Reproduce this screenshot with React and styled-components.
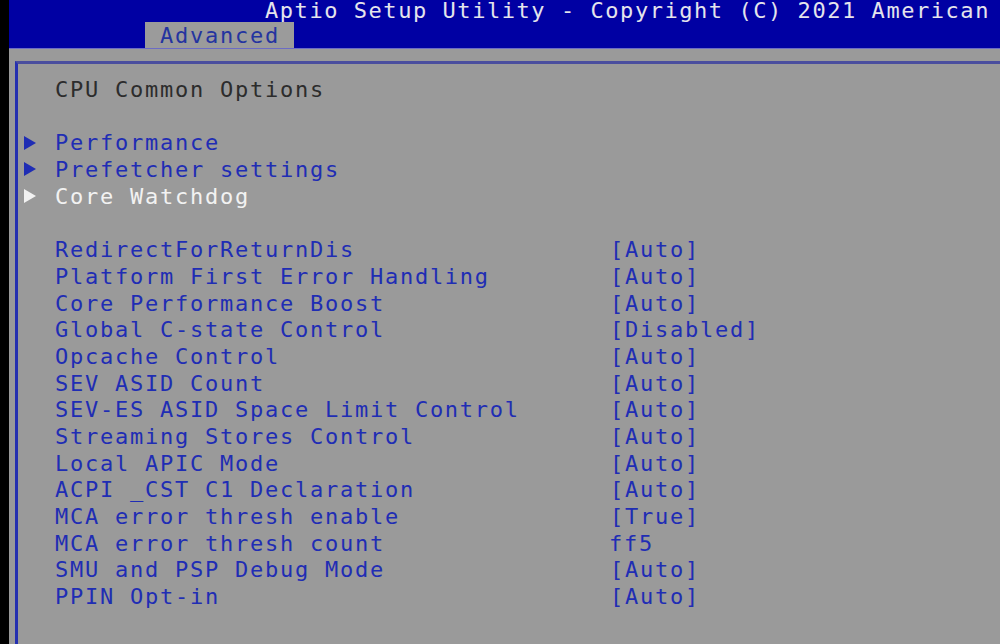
import React from 'react';
import styled, { createGlobalStyle } from 'styled-components';

const GlobalStyle = createGlobalStyle`
  html, body {
    margin: 0;
    padding: 0;
    background: #000;
    overflow: hidden;
  }
  body {
    font-family: 'DejaVu Sans Mono', 'Liberation Mono', monospace;
  }
`;

const ROW = 26.7;

const Screen = styled.div`
  display: flex;
  height: 100vh;
  background: #000;
`;

const Edge = styled.div`
  width: 9px;
  flex-shrink: 0;
`;

const Main = styled.div`
  flex: 1;
  display: flex;
  flex-direction: column;
  min-width: 0;
`;

const Header = styled.div`
  height: 48px;
  background: #0000a3;
  border-bottom: 1px solid #6c6cc4;
  display: flex;
  flex-direction: column;
`;

const HeaderTitle = styled.div`
  height: 22px;
  padding-left: 256px;
  font-size: 22px;
  letter-spacing: 1.55px;
  line-height: 21px;
  color: #e4e4ec;
  white-space: nowrap;
`;

const TabRow = styled.div`
  height: 26px;
  display: flex;
  padding-left: 136px;
`;

const Tab = styled.div`
  width: 149px;
  box-sizing: border-box;
  padding-left: 15px;
  background: #9b9b9b;
  color: #2434a0;
  font-size: 22px;
  letter-spacing: 1.75px;
  line-height: 28px;
  white-space: nowrap;
`;

const Body = styled.div`
  flex: 1;
  background: #9a9a9a;
  padding: 12px 0 0 6px;
  display: flex;
  min-height: 0;
`;

const Panel = styled.div`
  flex: 1;
  border-top: 3px solid #4a4e9e;
  border-left: 3px solid #2530b0;
  padding: 13px 0 0 6px;
  font-size: 22px;
  letter-spacing: 1.75px;
  line-height: ${ROW}px;
  white-space: nowrap;
`;

const Line = styled.div`
  display: grid;
  grid-template-columns: 31px 555px auto;
  height: ${ROW}px;
  align-items: center;
  color: ${({ $tone }) =>
    $tone === 'title' ? '#2c2c2c' : $tone === 'active' ? '#f2f2f2' : '#1f2db4'};
`;

const Spacer = styled.div`
  height: ${ROW}px;
`;

const Arrow = styled.span`
  width: 0;
  height: 0;
  border-top: 7px solid transparent;
  border-bottom: 7px solid transparent;
  border-left: 12px solid currentColor;
  margin-top: -2px;
`;

const Label = styled.span``;

const Value = styled.span`
  margin-left: ${({ $raw }) => ($raw ? '-1px' : '0')};
`;

const menus = [
  { name: 'Performance' },
  { name: 'Prefetcher settings' },
  { name: 'Core Watchdog', active: true },
];

const settings = [
  ['RedirectForReturnDis', '[Auto]'],
  ['Platform First Error Handling', '[Auto]'],
  ['Core Performance Boost', '[Auto]'],
  ['Global C-state Control', '[Disabled]'],
  ['Opcache Control', '[Auto]'],
  ['SEV ASID Count', '[Auto]'],
  ['SEV-ES ASID Space Limit Control', '[Auto]'],
  ['Streaming Stores Control', '[Auto]'],
  ['Local APIC Mode', '[Auto]'],
  ['ACPI _CST C1 Declaration', '[Auto]'],
  ['MCA error thresh enable', '[True]'],
  ['MCA error thresh count', 'ff5'],
  ['SMU and PSP Debug Mode', '[Auto]'],
  ['PPIN Opt-in', '[Auto]'],
];

export default function App() {
  return (
    <>
      <GlobalStyle />
      <Screen>
        <Edge />
        <Main>
          <Header>
            <HeaderTitle>Aptio Setup Utility - Copyright (C) 2021 American</HeaderTitle>
            <TabRow>
              <Tab>Advanced</Tab>
            </TabRow>
          </Header>
          <Body>
            <Panel>
              <Line $tone="title">
                <span />
                <Label>CPU Common Options</Label>
              </Line>
              <Spacer />
              {menus.map((m) => (
                <Line key={m.name} $tone={m.active ? 'active' : 'item'}>
                  <Arrow />
                  <Label>{m.name}</Label>
                </Line>
              ))}
              <Spacer />
              {settings.map(([name, value]) => (
                <Line key={name} $tone="item">
                  <span />
                  <Label>{name}</Label>
                  <Value $raw={!value.startsWith('[')}>{value}</Value>
                </Line>
              ))}
            </Panel>
          </Body>
        </Main>
      </Screen>
    </>
  );
}
